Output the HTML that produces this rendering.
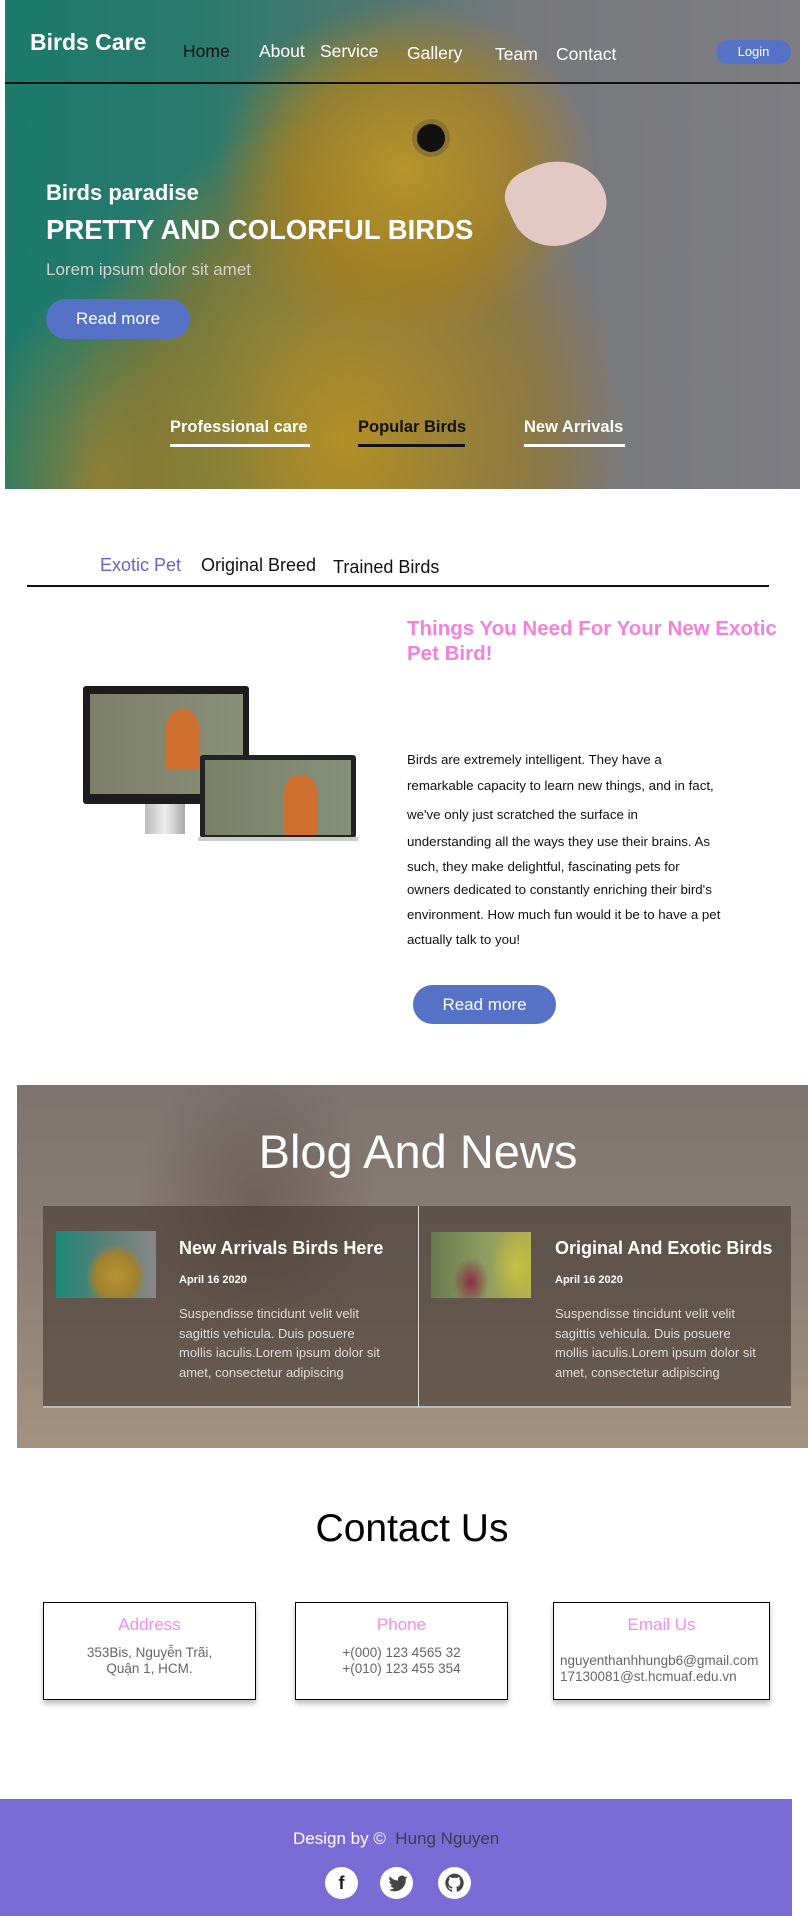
<!DOCTYPE html>
<html><head><meta charset="utf-8"><style>
*{margin:0;padding:0;box-sizing:border-box}
body{width:808px;height:1916px;position:relative;background:#fff;font-family:"Liberation Sans","Noto Sans CJK SC",sans-serif;overflow:hidden}
.a{position:absolute;white-space:nowrap}
#hero{position:absolute;left:5px;top:0;width:795px;height:489px;overflow:hidden;
background:
radial-gradient(ellipse 190px 170px at 400px 170px,rgba(185,150,40,.95),rgba(170,130,30,.75) 60%,rgba(0,0,0,0) 100%),
radial-gradient(ellipse 280px 330px at 340px 440px,rgba(185,145,35,.95),rgba(150,120,40,.65) 70%,rgba(0,0,0,0) 100%),
radial-gradient(ellipse 130px 200px at 100px 480px,rgba(160,130,50,.85),rgba(0,0,0,0)),
linear-gradient(90deg,#1c7a6b 0%,#2a7a6c 25%,#4f7770 45%,#77787c 65%,#7d7d82 100%)}
.nav{color:#fff;font-size:17.5px;top:41px}
.btn{position:absolute;background:#5572c6;color:#fff;border-radius:20px;text-align:center}
.tab{position:absolute;font-size:16.5px;font-weight:bold;top:418px}
.card{position:absolute;top:1206px;height:202px;background:rgba(70,58,50,.62);border-bottom:2px solid #bbb}
.ct{position:absolute;color:#fff;font-size:18px;font-weight:bold;top:1238px}
.cd{position:absolute;color:#fff;font-size:11px;font-weight:bold;top:1274px}
.cx{position:absolute;color:#ddd;font-size:13px;line-height:19.5px;top:1304px}
.box{position:absolute;top:1602px;height:98px;border:1.5px solid #000;box-shadow:0 4px 5px rgba(0,0,0,.25);text-align:center;background:#fff}
.box h4{font-weight:normal;color:#f58bf0;font-size:17px;margin-top:12px}
.box p{color:#666;font-size:13.5px;line-height:16px}
.ic{position:absolute;top:1867px;width:33px;height:32px;border-radius:50%;background:#fff}
</style></head><body>
<div id="hero">
 <div style="position:absolute;left:412px;top:124px;width:28px;height:28px;border-radius:50%;background:#111;box-shadow:0 0 0 5px rgba(120,100,50,.6)"></div>
 <div style="position:absolute;left:505px;top:160px;width:95px;height:85px;background:#e2c9c4;border-radius:35% 70% 50% 60%;transform:rotate(-25deg)"></div>
 <div style="position:absolute;left:0;top:82px;width:795px;height:1.5px;background:#111"></div>
</div>
<div class="a" style="left:30px;top:29px;color:#fff;font-size:23px;font-weight:bold">Birds Care</div>
<div class="a nav" style="left:183px;color:#111">Home</div>
<div class="a nav" style="left:259px">About</div>
<div class="a nav" style="left:320px">Service</div>
<div class="a nav" style="left:407px;top:43px">Gallery</div>
<div class="a nav" style="left:495px;top:44px">Team</div>
<div class="a nav" style="left:556px;top:44px">Contact</div>
<div class="btn" style="left:716px;top:40px;width:75px;height:24px;font-size:13px;line-height:24px">Login</div>
<div class="a" style="left:46px;top:180px;color:#fff;font-size:22px;font-weight:bold">Birds paradise</div>
<div class="a" style="left:46px;top:214px;color:#fff;font-size:27.5px;font-weight:bold">PRETTY AND COLORFUL BIRDS</div>
<div class="a" style="left:46px;top:260px;color:#d8d0c8;font-size:17px">Lorem ipsum dolor sit amet</div>
<div class="btn" style="left:46px;top:299px;width:144px;height:40px;font-size:17px;line-height:40px">Read more</div>
<div class="tab" style="left:170px;color:#fff">Professional care</div>
<div class="a" style="left:170px;top:444px;width:140px;height:3px;background:#fff"></div>
<div class="tab" style="left:358px;color:#111">Popular Birds</div>
<div class="a" style="left:358px;top:444px;width:107px;height:3px;background:#111"></div>
<div class="tab" style="left:524px;color:#fff">New Arrivals</div>
<div class="a" style="left:524px;top:444px;width:101px;height:3px;background:#fff"></div>

<div class="a" style="left:100px;top:555px;font-size:18px;color:#6c5fd0">Exotic Pet</div>
<div class="a" style="left:201px;top:555px;font-size:18px;color:#111">Original Breed</div>
<div class="a" style="left:333px;top:557px;font-size:18px;color:#111">Trained Birds</div>
<div class="a" style="left:27px;top:585px;width:742px;height:2px;background:#111"></div>
<div class="a" style="left:407px;top:616px;font-size:20.5px;font-weight:bold;color:#f57fdb;line-height:25px">Things You Need For Your New Exotic<br>Pet Bird!</div>
<!-- devices -->
<div class="a" style="left:83px;top:686px;width:166px;height:118px;background:#1d1b1c;border-radius:3px"></div>
<div class="a" style="left:90px;top:694px;width:153px;height:100px;background:linear-gradient(90deg,#7d8068,#8a8f78)"></div>
<div class="a" style="left:145px;top:804px;width:40px;height:30px;background:linear-gradient(90deg,#bbb,#eee,#aaa)"></div>
<div class="a" style="left:200px;top:755px;width:156px;height:83px;background:#222;border-radius:3px"></div>
<div class="a" style="left:205px;top:760px;width:146px;height:75px;background:linear-gradient(90deg,#7a8068,#86907a)"></div>
<div class="a" style="left:283px;top:775px;width:35px;height:60px;background:#d07030;border-radius:40% 40% 10% 10%"></div>
<div class="a" style="left:165px;top:710px;width:35px;height:60px;background:#d07030;border-radius:40% 40% 10% 10%"></div>
<div class="a" style="left:198px;top:837px;width:160px;height:4px;background:#ccc"></div>
<div class="a" style="left:407px;top:751px;font-size:13.3px;color:#111;line-height:18px">Birds are extremely intelligent. They have a</div>
<div class="a" style="left:407px;top:778px;font-size:13.3px;color:#111">remarkable capacity to learn new things, and in fact,</div>
<div class="a" style="left:407px;top:807px;font-size:13.3px;color:#111">we've only just scratched the surface in</div>
<div class="a" style="left:407px;top:834px;font-size:13.3px;color:#111">understanding all the ways they use their brains. As</div>
<div class="a" style="left:407px;top:859px;font-size:13.3px;color:#111">such, they make delightful, fascinating pets for</div>
<div class="a" style="left:407px;top:882px;font-size:13.3px;color:#111">owners dedicated to constantly enriching their bird's</div>
<div class="a" style="left:407px;top:907px;font-size:13.3px;color:#111">environment. How much fun would it be to have a pet</div>
<div class="a" style="left:407px;top:932px;font-size:13.3px;color:#111">actually talk to you!</div>
<div class="btn" style="left:413px;top:985px;width:143px;height:39px;font-size:17px;line-height:39px">Read more</div>

<div class="a" style="left:17px;top:1085px;width:791px;height:363px;background:radial-gradient(ellipse 120px 150px at 240px 120px,rgba(90,70,70,.5),rgba(0,0,0,0)),linear-gradient(180deg,#7d746f 0%,#8b7f75 50%,#a39380 100%)"></div>
<div class="a" style="left:0;top:1124px;width:836px;text-align:center;color:#fff;font-size:47px">Blog And News</div>
<div class="card" style="left:43px;width:375px"></div>
<div class="card" style="left:418px;width:373px;border-left:1px solid #ddd"></div>
<div class="a" style="left:56px;top:1231px;width:100px;height:67px;background:radial-gradient(ellipse 30px 32px at 60px 45px,#b99530,#a08230 70%,rgba(0,0,0,0)),linear-gradient(90deg,#1d8a78,#5a7f78 50%,#888 100%)"></div>
<div class="a" style="left:431px;top:1232px;width:100px;height:66px;background:radial-gradient(ellipse 18px 25px at 40px 50px,#8b3040,rgba(0,0,0,0)),radial-gradient(ellipse 25px 40px at 85px 35px,#c8c040,rgba(0,0,0,0)),linear-gradient(90deg,#6a7a50,#8a9a60,#b0b050)"></div>
<div class="ct" style="left:179px">New Arrivals Birds Here</div>
<div class="ct" style="left:555px">Original And Exotic Birds</div>
<div class="cd" style="left:179px">April 16 2020</div>
<div class="cd" style="left:555px">April 16 2020</div>
<div class="cx" style="left:179px">Suspendisse tincidunt velit velit<br>sagittis vehicula. Duis posuere<br>mollis iaculis.Lorem ipsum dolor sit<br>amet, consectetur adipiscing</div>
<div class="cx" style="left:555px">Suspendisse tincidunt velit velit<br>sagittis vehicula. Duis posuere<br>mollis iaculis.Lorem ipsum dolor sit<br>amet, consectetur adipiscing</div>

<div class="a" style="left:0;top:1507px;width:824px;text-align:center;font-size:39px;color:#000">Contact Us</div>
<div class="box" style="left:43px;width:213px"><h4>Address</h4><p style="margin-top:10px">353Bis, Nguyễn Trãi,<br>Quận 1, HCM.</p></div>
<div class="box" style="left:295px;width:213px"><h4>Phone</h4><p style="margin-top:10px">+(000) 123 4565 32<br>+(010) 123 455 354</p></div>
<div class="box" style="left:553px;width:217px"><h4>Email Us</h4><p style="margin-top:18px;text-align:left;padding-left:6px">nguyenthanhhungb6@gmail.com<br>17130081@st.hcmuaf.edu.vn</p></div>

<div class="a" style="left:0;top:1799px;width:792px;height:117px;background:#7b6bd4"></div>
<div class="a" style="left:293px;top:1829px;font-size:17px;color:#fff">Design by ©&nbsp;&nbsp;<span style="color:#3d3a50">Hung Nguyen</span></div>
<div class="ic" style="left:325px;text-align:center;font-weight:bold;font-size:18px;line-height:32px;color:#222">f</div>
<div class="ic" style="left:380px"><svg width="33" height="32" viewBox="0 0 24 24"><path d="M19 8.5c.6-.4 1-1 1.2-1.6-.6.3-1.2.5-1.8.6a3 3 0 0 0-5.2 2.7A8.5 8.5 0 0 1 7 7a3 3 0 0 0 .9 4 3 3 0 0 1-1.300-.4 3 3 0 0 0 2.4 2.900 3 3 0 0 1-1.4.1 3 3 0 0 0 2.8 2.1A6 6 0 0 1 6 17a8.5 8.5 0 0 0 13-7.6z" fill="#444"/></svg></div>
<div class="ic" style="left:438px"><svg width="33" height="32" viewBox="0 0 24 24"><path d="M12 5a7 7 0 0 0-2.2 13.6c.4 0 .5-.2.5-.4v-1.3c-2 .4-2.4-.9-2.4-.9-.3-.8-.8-1-.8-1-.6-.4 0-.4 0-.4.7 0 1.1.7 1.1.7.6 1.1 1.7.8 2.1.6 0-.5.2-.8.4-1-1.6-.2-3.2-.8-3.2-3.5 0-.8.3-1.4.7-1.9 0-.2-.3-.9.1-1.900 0 0 .6-.2 1.9.7a6.6 6.6 0 0 1 3.5 0c1.3-.9 1.9-.7 1.9-.7.4 1 .1 1.7.1 1.9.5.5.7 1.1.7 1.9 0 2.7-1.6 3.300-3.2 3.5.3.2.5.7.5 1.3v2c0 .2.1.4.5.4A7 7 0 0 0 12 5z" fill="#444"/></svg></div>
</body></html>
